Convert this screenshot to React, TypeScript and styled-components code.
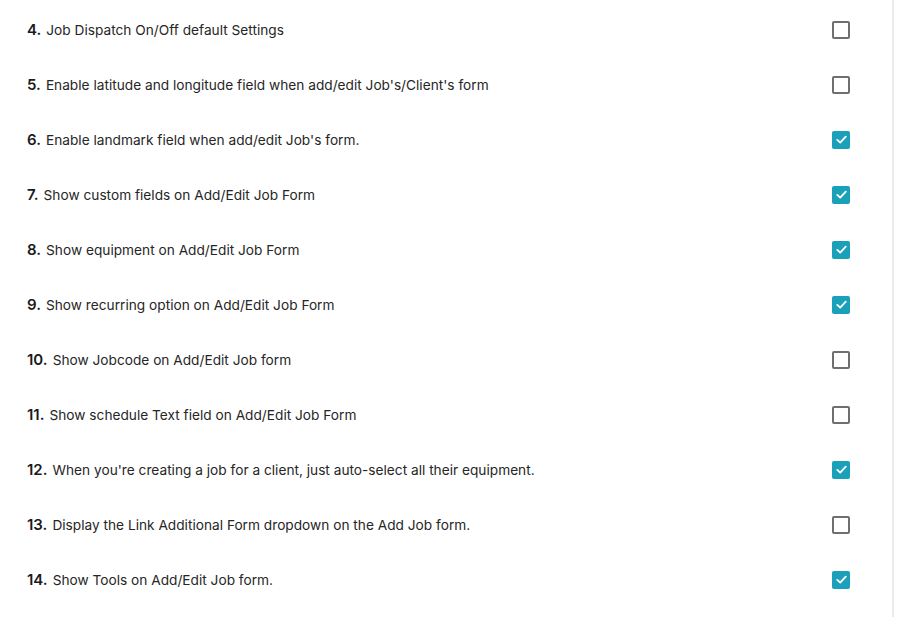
import styled, { createGlobalStyle } from "styled-components";

const GlobalStyle = createGlobalStyle`
  html, body {
    margin: 0;
    padding: 0;
    background: #ffffff;
  }
  body {
    font-family: Inter, "Liberation Sans", Arial, sans-serif;
    color: #262626;
  }
`;

type Setting = {
  num: number;
  label: string;
  checked: boolean;
};

const settings: Setting[] = [
  { num: 4, label: "Job Dispatch On/Off default Settings", checked: false },
  { num: 5, label: "Enable latitude and longitude field when add/edit Job's/Client's form", checked: false },
  { num: 6, label: "Enable landmark field when add/edit Job's form.", checked: true },
  { num: 7, label: "Show custom fields on Add/Edit Job Form", checked: true },
  { num: 8, label: "Show equipment on Add/Edit Job Form", checked: true },
  { num: 9, label: "Show recurring option on Add/Edit Job Form", checked: true },
  { num: 10, label: "Show Jobcode on Add/Edit Job form", checked: false },
  { num: 11, label: "Show schedule Text field on Add/Edit Job Form", checked: false },
  { num: 12, label: "When you're creating a job for a client, just auto-select all their equipment.", checked: true },
  { num: 13, label: "Display the Link Additional Form dropdown on the Add Job form.", checked: false },
  { num: 14, label: "Show Tools on Add/Edit Job form.", checked: true },
];

const Page = styled.div`
  display: flex;
  height: 617px;
  overflow: hidden;
`;

const Panel = styled.div`
  width: 894px;
  border-right: 2px solid #ececec;
  padding: 2px 0 0 27px;
  box-sizing: border-box;
`;

const Row = styled.div`
  display: flex;
  align-items: center;
  justify-content: space-between;
  height: 55px;
  padding-right: 42px;
`;

const Label = styled.p`
  margin: 0;
  font-size: 13.7px;
  color: #262626;
`;

const Num = styled.span`
  font-weight: 600;
  font-size: 15px;
  margin-right: 5px;
  color: #1a1a1a;
`;

const Box = styled.span<{ $checked: boolean }>`
  display: flex;
  align-items: center;
  justify-content: center;
  width: 18px;
  height: 18px;
  box-sizing: border-box;
  border-radius: 2px;
  border: ${(p) => (p.$checked ? "none" : "2px solid #6f6f6f")};
  background: ${(p) => (p.$checked ? "#1aa0b8" : "#ffffff")};
`;

const Check = () => (
  <svg width="13" height="13" viewBox="0 0 14 14" fill="none">
    <path
      d="M2.5 7.4 L5.6 10.3 L11.6 3.9"
      stroke="#ffffff"
      strokeWidth="2"
      strokeLinecap="round"
      strokeLinejoin="round"
    />
  </svg>
);

export default function App() {
  return (
    <Page>
      <GlobalStyle />
      <Panel>
        {settings.map((s) => (
          <Row key={s.num}>
            <Label>
              <Num>{s.num}.</Num>
              {s.label}
            </Label>
            <Box $checked={s.checked}>{s.checked && <Check />}</Box>
          </Row>
        ))}
      </Panel>
    </Page>
  );
}
